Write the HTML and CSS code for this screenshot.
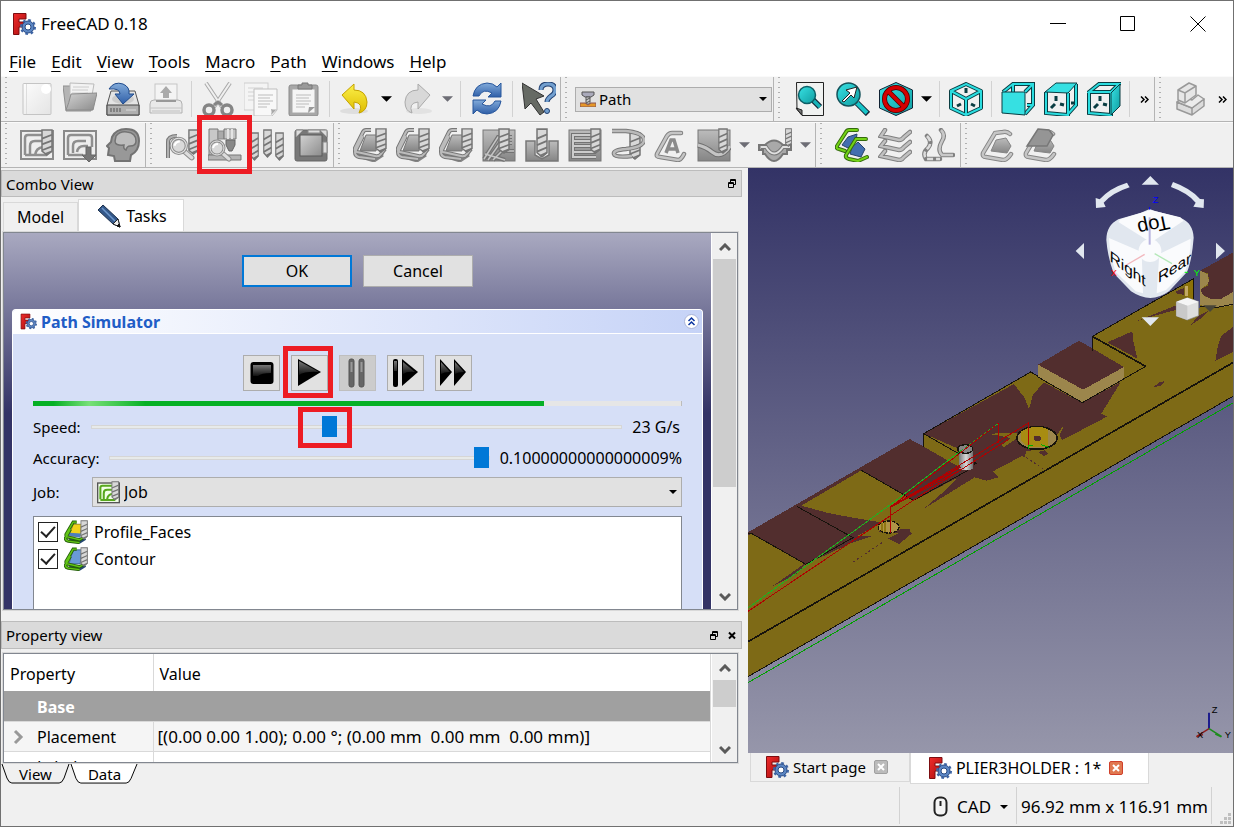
FILE: index.html
```html
<!DOCTYPE html>
<html lang="en">
<head>
<meta charset="utf-8">
<title>FreeCAD 0.18</title>
<link rel="stylesheet" href="styles.css">
</head>
<body>
<svg class="defs" aria-hidden="true">
  <defs>
    <linearGradient id="gGrey" x1="0" y1="0" x2="1" y2="1"><stop offset="0" stop-color="#d2d2d2"/><stop offset="1" stop-color="#8c8c8c"/></linearGradient>
    <linearGradient id="gDark" x1="0" y1="0" x2="0" y2="1"><stop offset="0" stop-color="#bcbcbc"/><stop offset="1" stop-color="#858585"/></linearGradient>
    <linearGradient id="gPaper" x1="0" y1="0" x2="1" y2="1"><stop offset="0" stop-color="#fcfcfc"/><stop offset="1" stop-color="#e4e4e4"/></linearGradient>
    <linearGradient id="gBlue" x1="0" y1="0" x2="0" y2="1"><stop offset="0" stop-color="#82abda"/><stop offset="1" stop-color="#2f5fa8"/></linearGradient>
    <linearGradient id="gYellow" x1="0" y1="0" x2="0" y2="1"><stop offset="0" stop-color="#fbf04a"/><stop offset="1" stop-color="#dfbd00"/></linearGradient>
    <linearGradient id="gCyan" x1="0" y1="0" x2="1" y2="1"><stop offset="0" stop-color="#38e2e4"/><stop offset="1" stop-color="#0f9ca0"/></linearGradient>
    <linearGradient id="gGloss" x1="0" y1="0" x2="0" y2="1"><stop offset="0" stop-color="#777"/><stop offset="1" stop-color="#111"/></linearGradient>
    <linearGradient id="gSky" x1="0" y1="0" x2="0" y2="1"><stop offset="0" stop-color="#333366"/><stop offset="1" stop-color="#9696aa"/></linearGradient>
    <linearGradient id="gRed" x1="0" y1="0" x2="1" y2="1"><stop offset="0" stop-color="#f02c2c"/><stop offset="1" stop-color="#a80d0d"/></linearGradient>
    <linearGradient id="gSteel" x1="0" y1="0" x2="1" y2="0"><stop offset="0" stop-color="#777"/><stop offset=".5" stop-color="#d8d8d8"/><stop offset="1" stop-color="#707070"/></linearGradient>
  </defs>

  <symbol id="logo" viewBox="0 0 24 24">
    <path d="M1.5 1.5H14V7H7v3h5v5H7v7.500H1.500z" fill="url(#gRed)" stroke="#7c0d10"/>
    <circle cx="16" cy="15" r="6" fill="#5b86c4" stroke="#2a4a82"/>
    <circle cx="16" cy="15" r="7" fill="none" stroke="#3c63a3" stroke-width="2" stroke-dasharray="2.700 2.800"/>
    <circle cx="16" cy="15" r="3" fill="#fff" stroke="#2a4a82"/>
  </symbol>
  <symbol id="bit" viewBox="0 0 12 28" preserveAspectRatio="none">
    <path d="M1 1h10v22l-5 4-5-4z" fill="#d8d8d8" stroke="#757575" stroke-width="1.500"/>
    <path d="M1 10l10-4M1 16l10-4M1 22l10-4M4 26l7-3" stroke="#757575" stroke-width="1.800"/>
  </symbol>
  <symbol id="lens" viewBox="0 0 24 24">
    <path d="M13 14l8 7" stroke="#8d8d8d" stroke-width="5" stroke-linecap="round"/><path d="M13 14l8 7" stroke="#dcdcdc" stroke-width="3" stroke-linecap="round"/>
    <circle cx="9" cy="10" r="7" fill="#d9d9d9" stroke="#8d8d8d" stroke-width="3"/><circle cx="9" cy="10" r="7" fill="none" stroke="#e6e6e6"/>
    <path d="M5 10q1-4 5-4" fill="none" stroke="#fff" stroke-width="2"/>
  </symbol>

  <symbol id="i-new" viewBox="0 0 34 34"><rect x="3" y="1.500" width="28" height="31" rx="1" fill="url(#gPaper)" stroke="#c4c4c4"/><path d="M6.500 2v30" stroke="#ddd"/><circle cx="26" cy="7" r="5" fill="#fff"/></symbol>
  <symbol id="i-open" viewBox="0 0 34 34"><path d="M0 4h8l2 3h18v22H3z" fill="#b4b4b4" stroke="#8f8f8f"/><path d="M7 1l24 1-3 17-21-2z" fill="#f3f3f3" stroke="#bbb"/><path d="M10 5h16M9 8h16M9 11h16" stroke="#ccc"/><path d="M8 12l26-1-4 17H3q3-7 5-16z" fill="url(#gGrey)" stroke="#8b8b8b"/></symbol>
  <symbol id="i-save" viewBox="0 0 34 34"><path d="M5 9h24l4 14v10H1V23z" fill="#e4e4e4" stroke="#555"/><path d="M1 23h32v10H1z" fill="#b0b0b0" stroke="#444"/><path d="M5 26v4M8 26v4M11 26v4M14 26v4" stroke="#555"/><path d="M20 28h10" stroke="#ddd"/><ellipse cx="17" cy="17" rx="11" ry="5" fill="#ccc"/><path d="M3 7Q8-1 17 2q7 3 6 10h5L17 22 9 12h5q0-6-11-5z" fill="url(#gBlue)" stroke="#1f4a8c"/></symbol>
  <symbol id="i-print" viewBox="0 0 34 34"><rect x="6" y="2" width="22" height="19" fill="#f4f4f4" stroke="#c5c5c5"/><path d="M17 4l6 7h-3v5h-6v-5h-3z" fill="#aaa"/><path d="M1 22q0-4 4-4h24q4 0 4 4v9H1z" fill="#e9e9e9" stroke="#b1b1b1"/><path d="M7 19h20" stroke="#999" stroke-width="2"/><path d="M1 26h32" stroke="#c4c4c4"/><rect x="3" y="28" width="28" height="4" fill="#d5d5d5"/></symbol>
  <symbol id="i-cut" viewBox="0 0 34 34"><path d="M5 1l16 24M29 1L13 25" stroke="#a9a9a9" stroke-width="4"/><path d="M5 1l16 24M29 1L13 25" stroke="#f0f0f0" stroke-width="2"/><circle cx="8" cy="28" r="5" fill="none" stroke="#858585" stroke-width="3.500"/><circle cx="26" cy="28" r="5" fill="none" stroke="#858585" stroke-width="3.500"/><path d="M13 23l4-3 4 3" stroke="#858585" stroke-width="3" fill="none"/></symbol>
  <symbol id="i-copy" viewBox="0 0 34 34"><rect x="0" y="1" width="24" height="27" fill="#f4f4f4" stroke="#cecece"/><path d="M4 6h15M4 10h6M4 14h6M4 18h6" stroke="#d2d2d2"/><path d="M10 7h23v21l-5 6H10z" fill="#f8f8f8" stroke="#bfbfbf"/><path d="M14 13h15M14 16h12M14 19h15M14 22h12M14 25h9" stroke="#bcbcbc"/><path d="M27 33q1-4 0-6 4 1 6 0z" fill="#a8a8a8"/></symbol>
  <symbol id="i-paste" viewBox="0 0 34 34"><rect x="2" y="3" width="29" height="31" rx="2" fill="#a7a7a7" stroke="#8b8b8b"/><rect x="5" y="7" width="23" height="24" fill="#f5f5f5" stroke="#aaa"/><path d="M11 7V3h4V1h6v2h4v4z" fill="#999" stroke="#777"/><path d="M9 13h15M9 16h13M9 19h15M9 22h13M9 25h9" stroke="#bbb"/><path d="M21 31l1-6h6z" fill="#999"/></symbol>
  <symbol id="i-undo" viewBox="0 0 34 34"><ellipse cx="15" cy="29" rx="14" ry="3" fill="#dedede"/><path d="M3 13L15 2v6q12 0 13 12 0 9-8 11 5-10-5-11v7z" fill="url(#gYellow)" stroke="#c4a200"/></symbol>
  <symbol id="i-redo" viewBox="0 0 34 34"><ellipse cx="19" cy="29" rx="13" ry="3" fill="#e2e2e2"/><path d="M30 13L18 2v6Q6 8 5 20q0 9 7 11-4-10 6-11v7z" fill="#d8d8d8" stroke="#aaa"/></symbol>
  <symbol id="i-refresh" viewBox="0 0 34 34"><path d="M3 14Q5 2 17 1q6 0 10 4l4-4v14H18l4-4q-9-5-13 3z" fill="url(#gBlue)" stroke="#27569c"/><path d="M31 19q-2 12-14 13-6 0-10-4l-4 4V18h13l-4 4q9 5 13-3z" fill="url(#gBlue)" stroke="#27569c"/></symbol>
  <symbol id="i-what" viewBox="0 0 34 34"><path d="M0 1l22 13-8 3 8 13-4 3-9-12-6 6z" fill="#666a64" stroke="#333"/><path d="M19 8q0-6 7-6t7 6q0 4-4 6-4 3-4 6" fill="none" stroke="#203f70" stroke-width="5"/><path d="M19 8q0-6 7-6t7 6q0 4-4 6-4 3-4 6" fill="none" stroke="#729fcf" stroke-width="3"/><circle cx="25" cy="29" r="2.500" fill="#729fcf" stroke="#203f70"/></symbol>
  <symbol id="i-fit" viewBox="0 0 34 34"><path d="M3.500.500h27v33H9l-5-6z" fill="#f0f2f1" stroke="#222"/><path d="M3 26l6 7V28z" fill="#777" stroke="#222"/><path d="M19 17l8 8" stroke="#123" stroke-width="6"/><path d="M19 17l8 8" stroke="#17b4b8" stroke-width="3.500"/><circle cx="14" cy="13" r="8.500" fill="url(#gCyan)" stroke="#0d5f66" stroke-width="1.500"/></symbol>
  <symbol id="i-zoom" viewBox="0 0 34 34"><path d="M21 21l11 11" stroke="#123" stroke-width="6"/><path d="M21 21l10 10" stroke="#17c4c8" stroke-width="4"/><circle cx="12.500" cy="12.500" r="11.500" fill="url(#gCyan)" stroke="#15525a" stroke-width="1.500"/><path d="M6 19l8-8-4-3 11-3-3 11-3-3-7 7z" fill="#fff" stroke="#222"/></symbol>
  <symbol id="i-draw" viewBox="0 0 34 34"><path d="M17 .500L33.500 8v18L17 33.500.500 26V8z" fill="url(#gCyan)" stroke="#123"/><circle cx="17" cy="17" r="11.500" fill="none" stroke="#4c0000" stroke-width="5"/><path d="M9 9l16 16" stroke="#4c0000" stroke-width="5"/><circle cx="17" cy="17" r="11.500" fill="none" stroke="#d40000" stroke-width="3.500"/><path d="M9 9l16 16" stroke="#d40000" stroke-width="3.500"/></symbol>
  <symbol id="i-iso" viewBox="0 0 34 34"><path d="M17 2l15 7v17l-15 7-15-7V9zM2 9l15 8 15-8M17 17v16" fill="none" stroke="#0a3d42" stroke-width="4" stroke-linejoin="round"/><path d="M17 2l15 7v17l-15 7-15-7V9zM2 9l15 8 15-8M17 17v16" fill="none" stroke="#2bdde0" stroke-width="2"/><path d="M17 6v5M8 24l4-2M26 24l-4-2" stroke="#0a3d42" stroke-width="3"/></symbol>
  <symbol id="i-front" viewBox="0 0 34 34"><path d="M2 10L12 2h20v21l-8 9M12 2v8M24 10l8-8M26 23h6" fill="none" stroke="#0a3d42" stroke-width="4"/><path d="M2 10L12 2h20v21l-8 9M12 2v8M24 10l8-8M26 23h6" fill="none" stroke="#2bdde0" stroke-width="2"/><path d="M1 10h23v23L1 31z" fill="#36e0e2" stroke="#0a3d42"/></symbol>
  <symbol id="i-top" viewBox="0 0 34 34"><path d="M2 10v21l22 2V11M24 32l8-9V2" fill="none" stroke="#0a3d42" stroke-width="4"/><path d="M2 10v21l22 2V11M24 32l8-9V2" fill="none" stroke="#2bdde0" stroke-width="2"/><path d="M1 10L12 1h21l-9 10z" fill="#36e0e2" stroke="#0a3d42"/><path d="M12 14v5M7 26l4-4M16 22l4 1M27 21h4" stroke="#0a3d42" stroke-width="3"/></symbol>
  <symbol id="i-right" viewBox="0 0 34 34"><path d="M2 10L12 2h20L24 10zM2 10v21l22 2V11" fill="none" stroke="#0a3d42" stroke-width="4"/><path d="M2 10L12 2h20L24 10zM2 10v21l22 2V11" fill="none" stroke="#2bdde0" stroke-width="2"/><path d="M24 11l9-9v22l-9 9z" fill="url(#gCyan)" stroke="#0a3d42"/><path d="M13 14v5M7 26l4-4M16 22l4 1" stroke="#0a3d42" stroke-width="3"/></symbol>
  <symbol id="i-part" viewBox="0 0 34 34"><path d="M3 20l15 6v7L3 27zM18 26l12-9v7l-12 9z" fill="#dcdcdc" stroke="#999" stroke-width="1.500" stroke-linejoin="round"/><path d="M3 20l7-5 8 3 6-5 6 4-12 9z" fill="#ececec" stroke="#999" stroke-width="1.500" stroke-linejoin="round"/><path d="M4 8L15 1l7 3v9l-11 8-7-3z" fill="#e6e6e6" stroke="#999" stroke-width="1.500" stroke-linejoin="round"/><path d="M4 8l7 3 11-7M11 11v10" fill="none" stroke="#999" stroke-width="1.500"/></symbol>

  <symbol id="i-job" viewBox="0 0 34 34"><rect x="1" y="3" width="32" height="28" fill="#eee" stroke="#8a8a8a" stroke-width="2"/><path d="M5 27V10q0-3 3-3h15M10 27v-9q0-5 5-5h8M27 27H5M15 27q1-7 8-8" fill="none" stroke="#8f8f8f" stroke-width="2.500"/><use href="#bit" x="21" y="1" width="12" height="27"/></symbol>
  <symbol id="i-post" viewBox="0 0 34 34"><rect x="1" y="3" width="32" height="28" fill="#eee" stroke="#8a8a8a" stroke-width="2"/><path d="M5 27V10q0-3 3-3h18q3 0 3 3v9M10 25v-7q0-5 5-5h8M20 27H5M14 24q1-6 7-6h4" fill="none" stroke="#8f8f8f" stroke-width="2.500"/><path d="M23 19h5v8h5l-7 7-7-7h4z" fill="#777" stroke="#666"/></symbol>
  <symbol id="i-head" viewBox="0 0 34 34"><path d="M6 9Q10 1 20 1q13 0 13 12 0 10-8 14l-1 6H9l-1-5-6-1 1-7-2-2 4-4z" fill="#989898" stroke="#737373" stroke-width="2"/><path d="M10 8q4-5 11-4 9 1 9 9 0 5-6 5-3 0-4 4-3-1-2-5-9 1-9-4z" fill="#bdbdbd" stroke="#737373" stroke-width="1.500"/></symbol>
  <symbol id="i-inspect" viewBox="0 0 34 34"><path d="M3 30V14q0-6 9-6" fill="none" stroke="#777" stroke-width="4"/><path d="M3 30V14q0-6 9-6" fill="none" stroke="#b2b2b2" stroke-width="2"/><use href="#bit" x="23" y="1" width="11" height="26"/><use href="#lens" x="4" y="7" width="26" height="26"/></symbol>
  <symbol id="i-sim" viewBox="0 0 34 34"><path d="M1 1h9v26H1z" fill="#c8c8c8" stroke="#777"/><path d="M10 3h6v8h-6z" fill="#aaa" stroke="#888"/><path d="M0 27h33v5H0z" fill="#b4b4b4" stroke="#777"/><path d="M16 1h12v10H16z" fill="#c3c3c3" stroke="#777"/><path d="M20 1v10M24 1v10" stroke="#e4e4e4" stroke-width="2"/><path d="M18 12h9v5l-3 6h-3l-3-6z" fill="#888" stroke="#666"/><use href="#lens" x="0" y="10" width="24" height="24"/></symbol>
  <symbol id="i-bits" viewBox="0 0 34 34"><use href="#bit" x="-1" y="4" width="9" height="29"/><use href="#bit" x="12" y="1" width="9" height="29"/><use href="#bit" x="24" y="4" width="9" height="29"/></symbol>
  <symbol id="i-setup" viewBox="0 0 34 34"><rect x="1" y="2" width="32" height="31" rx="2" fill="#787878" stroke="#666"/><rect x="6" y="7" width="22" height="21" fill="url(#gGrey)" stroke="#5a5a5a"/><path d="M2 9V2h7M14 2h12v3H14zM33 14v11h-4V14zM26 2h7v7" fill="#ddd" stroke="#888"/></symbol>
  <symbol id="i-profile" viewBox="0 0 34 34"><path d="M5 25l16 6 9-6M5 28l16 5 9-6" fill="none" stroke="#858585" stroke-width="3"/><path d="M13 7h12l-2 16H7z" fill="url(#gDark)" stroke="#777"/><path d="M18 2h-5q-2 0-3 2L2 20q-1 3 2 4l18 4q4 1 6-2l4-5M10 8L2 24q0 4 4 5l16 2" fill="none" stroke="#777" stroke-width="4"/><path d="M18 2h-5q-2 0-3 2L2 20q-1 3 2 4l18 4q4 1 6-2l4-5M10 8L2 24q0 4 4 5l16 2" fill="none" stroke="#bcbcbc" stroke-width="2"/><use href="#bit" x="22" y="0" width="12" height="25"/></symbol>
  <symbol id="i-pocket" viewBox="0 0 34 34"><rect x="1" y="2" width="32" height="31" fill="url(#gDark)" stroke="#777"/><path d="M2 31L16 9h14M6 32l12-17h12M11 32l9-9h12M3 26l20 6" fill="none" stroke="#737373" stroke-width="4"/><path d="M2 31L16 9h14M6 32l12-17h12M11 32l9-9h12M3 26l20 6" fill="none" stroke="#c5c5c5" stroke-width="1.500"/><use href="#bit" x="16" y="0" width="12" height="26"/></symbol>
  <symbol id="i-drill" viewBox="0 0 34 34"><path d="M1 13h9v14l7 4 7-4V13h9v20H1z" fill="url(#gDark)" stroke="#777" stroke-width="1.500"/><use href="#bit" x="11" y="0" width="12" height="30"/></symbol>
  <symbol id="i-face" viewBox="0 0 34 34"><rect x="1" y="2" width="32" height="31" fill="url(#gDark)" stroke="#777"/><path d="M30 7H5v6h22M27 18H5v-6M5 18v6h23M28 29H5v-6" fill="none" stroke="#737373" stroke-width="4"/><path d="M30 7H5v6h22M27 18H5v-6M5 18v6h23M28 29H5v-6" fill="none" stroke="#ccc" stroke-width="2"/><use href="#bit" x="22" y="0" width="11" height="26"/></symbol>
  <symbol id="i-helix" viewBox="0 0 34 34"><use href="#bit" x="18" y="4" width="12" height="28"/><path d="M1 3h14q18 2 18 9t-18 9Q2 22 3 26t18 2" fill="none" stroke="#777" stroke-width="4.500"/><path d="M1 3h14q18 2 18 9t-18 9Q2 22 3 26t18 2" fill="none" stroke="#bababa" stroke-width="2.500"/></symbol>
  <symbol id="i-engrave" viewBox="0 0 34 34"><path d="M27 5H18q-3 0-5 3L3 26q-1 3 3 3l18 3q3 0 6-6" fill="none" stroke="#808080" stroke-width="4.500" stroke-linecap="round"/><path d="M27 5H18q-3 0-5 3L3 26q-1 3 3 3l18 3q3 0 6-6" fill="none" stroke="#c5c5c5" stroke-width="2.500" stroke-linecap="round"/><path d="M12 25l5-13h3l4 13M14 21h8" fill="none" stroke="#8b8b8b" stroke-width="3.500"/></symbol>
  <symbol id="i-surface" viewBox="0 0 34 34"><rect x="1" y="2" width="32" height="31" fill="url(#gDark)" stroke="#777"/><path d="M1 17q8 2 14 7t12 1q5-4 6-7" fill="none" stroke="#707070" stroke-width="5"/><path d="M1 17q8 2 14 7t12 1q5-4 6-7" fill="none" stroke="#c5c5c5" stroke-width="3"/><use href="#bit" x="21" y="0" width="10" height="26"/></symbol>
  <symbol id="i-bowl" viewBox="0 0 34 34"><path d="M1 17h6q9-9 18 0h8v5h-4v4h-4q-9 14-18 0H5v-4H1z" fill="#a9a9a9" stroke="#777" stroke-width="2"/><path d="M3 19h5q8 13 17 0h7" fill="none" stroke="#777" stroke-width="4"/><path d="M3 19h5q8 13 17 0h7" fill="none" stroke="#e0e0e0" stroke-width="2"/><use href="#bit" x="27" y="0" width="7" height="19"/></symbol>
  <symbol id="i-dressup" viewBox="0 0 34 34"><path d="M22 2H14q-2 0-3 2L2 18q-1 3 2 3l6 2" fill="none" stroke="#336a0c" stroke-width="4" stroke-linecap="round"/><path d="M22 2H14q-2 0-3 2L2 18q-1 3 2 3l6 2" fill="none" stroke="#73d216" stroke-width="2" stroke-linecap="round"/><path d="M13 9l9-3-1 7-8 7-6-3zM17 19l6-5 7 7-4 8-11-3z" fill="#426eb0" stroke="#27426c"/><path d="M31 11H21L11 27q-1 3 3 4l9 2 9-4" fill="none" stroke="#336a0c" stroke-width="4" stroke-linecap="round"/><path d="M31 11H21L11 27q-1 3 3 4l9 2 9-4" fill="none" stroke="#73d216" stroke-width="2" stroke-linecap="round"/></symbol>
  <symbol id="i-array" viewBox="0 0 34 34"><path d="M7 2l-4 6 18 4q3 0 5-3l6-5M7 13l-4 5 18 4q3 0 5-3l6-5M7 23l-4 5 18 4q3 0 5-3l6-5" fill="none" stroke="#818181" stroke-width="4.500" stroke-linecap="round"/><path d="M7 2l-4 6 18 4q3 0 5-3l6-5M7 13l-4 5 18 4q3 0 5-3l6-5M7 23l-4 5 18 4q3 0 5-3l6-5" fill="none" stroke="#c1c1c1" stroke-width="2.500" stroke-linecap="round"/></symbol>
  <symbol id="i-custom" viewBox="0 0 34 34"><path d="M6 8q6 6 1 12-6 5-2 11h14M20 2q5 5 1 11-5 9 0 14h11" fill="none" stroke="#818181" stroke-width="4.500" stroke-linecap="round"/><path d="M6 8q6 6 1 12-6 5-2 11h14" fill="none" stroke="#ddd" stroke-width="2.500" stroke-dasharray="6 3"/><path d="M20 2q5 5 1 11-5 9 0 14h11" fill="none" stroke="#c9c9c9" stroke-width="2.500"/></symbol>
  <symbol id="i-hop" viewBox="0 0 34 34"><path d="M16 12l10-2 5 8-4 7-16-2z" fill="url(#gDark)" stroke="#858585"/><path d="M30 6q-3-3-7-2l-8 1-12 20q-1 4 3 4l17 3q4 0 8-6" fill="none" stroke="#868686" stroke-width="4.500" stroke-linecap="round"/><path d="M30 6q-3-3-7-2l-8 1-12 20q-1 4 3 4l17 3q4 0 8-6" fill="none" stroke="#c6c6c6" stroke-width="2.500" stroke-linecap="round"/></symbol>
  <symbol id="i-stock" viewBox="0 0 34 34"><use href="#i-hop"/><path d="M15 1l11 1 4 5-6 11H4z" fill="#959595" stroke="#777" stroke-width="1.500"/></symbol>

  <symbol id="i-mill" viewBox="0 0 16 16"><path d="M2 1h12v3l-3 2H5L2 4z" fill="#aab" stroke="#555"/><path d="M6 6h4v7H6z" fill="#ccc" stroke="#555"/><path d="M6 9l4-2M6 12l4-2" stroke="#555"/><path d="M0 12h5l3 2 3-2h5v4H0z" fill="#e59728" stroke="#855"/></symbol>
  <symbol id="i-jobc" viewBox="0 0 34 34"><rect x="1" y="3" width="32" height="29" fill="#f2ffe8" stroke="#555" stroke-width="2"/><path d="M5 27V10q0-3 3-3h15M10 27v-9q0-5 5-5h8M27 28H5M15 27q1-7 8-8" fill="none" stroke="#58a81e" stroke-width="3"/><use href="#bit" x="21" y="0" width="12" height="29"/></symbol>
  <symbol id="i-opy" viewBox="0 0 34 34"><path d="M8 26l14 5 8-5" stroke="#24476f" stroke-width="5" fill="none"/><path d="M13 6h12l-2 17H7z" fill="#f0d21c" stroke="#7a6a00"/><path d="M8 18l16 1-1 6-17-3z" fill="#4c7dbd"/><path d="M18 3h-5L3 20q-1 3 2 4l17 4 7-4M9 13L2 26q0 3 4 4l16 2" fill="none" stroke="#25600a" stroke-width="4.500"/><path d="M18 3h-5L3 20q-1 3 2 4l17 4 7-4M9 13L2 26q0 3 4 4l16 2" fill="none" stroke="#63c716" stroke-width="2"/><use href="#bit" x="23" y="0" width="11" height="28"/></symbol>
  <symbol id="i-opb" viewBox="0 0 34 34"><path d="M8 26l14 5 8-5" stroke="#24476f" stroke-width="5" fill="none"/><path d="M13 4h12l-2 20H7z" fill="#6a9ad8" stroke="#24476f"/><path d="M18 3h-5L3 20q-1 3 2 4l17 4 7-4M9 13L2 26q0 3 4 4l16 2" fill="none" stroke="#25600a" stroke-width="4.500"/><path d="M18 3h-5L3 20q-1 3 2 4l17 4 7-4M9 13L2 26q0 3 4 4l16 2" fill="none" stroke="#63c716" stroke-width="2"/><use href="#bit" x="23" y="0" width="11" height="28"/></symbol>
  <symbol id="i-pencil" viewBox="0 0 24 24"><path d="M6 1L1 6l15 14 7 3-2-8z" fill="#34588a" stroke="#1b2f4c"/><path d="M5 4l13 13" stroke="#6d97cc" stroke-width="1.500"/><path d="M16 20l5-5 2 8z" fill="#eee" stroke="#222"/><path d="M20 22l2-2 1 3z" fill="#111" stroke="#111"/></symbol>
  <symbol id="up" viewBox="0 0 12 9"><path d="M1 7l5-5 5 5" fill="none" stroke="#5a5a5a" stroke-width="3"/></symbol>
  <symbol id="down" viewBox="0 0 12 9"><path d="M1 2l5 5 5-5" fill="none" stroke="#5a5a5a" stroke-width="3"/></symbol>
  <symbol id="tri" viewBox="0 0 12 6"><path d="M0 0h12L6 6z" fill="currentColor"/></symbol>
  <symbol id="more" viewBox="0 0 9 7"><path d="M1 .500l3 3-3 3M5 .500l3 3-3 3" fill="none" stroke="#000" stroke-width="1.500"/></symbol>
  <symbol id="float" viewBox="0 0 8 9"><path d="M2.500 3V.500h5v5H6M2 1.500h6M.500 3.500h5v5h-5zM0 4.500h6" fill="none" stroke="#000"/></symbol>
  <symbol id="x" viewBox="0 0 8 8"><path d="M1 1l6 6M7 1L1 7" stroke="currentColor" stroke-width="2"/></symbol>
</svg>

<div class="window">
  <header class="titlebar">
    <svg class="logo"><use href="#logo"/></svg>
    <h1>FreeCAD 0.18</h1>
    <div class="controls">
      <button aria-label="Minimize"><svg viewBox="0 0 16 16"><path d="M0 7.500h16" stroke="#000"/></svg></button>
      <button aria-label="Maximize"><svg viewBox="0 0 16 16"><path d="M.500.500h14v14H.500z" fill="none" stroke="#000"/></svg></button>
      <button aria-label="Close"><svg viewBox="0 0 16 16"><path d="M.500.500l15 15M15.500.500l-15 15" stroke="#000"/></svg></button>
    </div>
  </header>

  <nav class="menubar">
    <a href="#"><u>F</u>ile</a><a href="#"><u>E</u>dit</a><a href="#"><u>V</u>iew</a><a href="#"><u>T</u>ools</a><a href="#"><u>M</u>acro</a><a href="#"><u>P</u>ath</a><a href="#"><u>W</u>indows</a><a href="#"><u>H</u>elp</a>
  </nav>

  <div class="toolrow">
    <div class="toolbar">
      <button class="tool" aria-label="New"><svg><use href="#i-new"/></svg></button>
      <button class="tool" aria-label="Open"><svg><use href="#i-open"/></svg></button>
      <button class="tool" aria-label="Save"><svg><use href="#i-save"/></svg></button>
      <button class="tool" aria-label="Print"><svg><use href="#i-print"/></svg></button>
      <span class="sep"></span>
      <button class="tool" aria-label="Cut"><svg><use href="#i-cut"/></svg></button>
      <button class="tool" aria-label="Copy"><svg><use href="#i-copy"/></svg></button>
      <button class="tool" aria-label="Paste"><svg><use href="#i-paste"/></svg></button>
      <span class="sep"></span>
      <button class="tool" aria-label="Undo"><svg><use href="#i-undo"/></svg></button>
      <button class="drop" aria-label="Undo list"><svg><use href="#tri"/></svg></button>
      <button class="tool" aria-label="Redo"><svg><use href="#i-redo"/></svg></button>
      <button class="drop off" aria-label="Redo list"><svg><use href="#tri"/></svg></button>
      <span class="sep"></span>
      <button class="tool" aria-label="Refresh"><svg><use href="#i-refresh"/></svg></button>
      <span class="sep"></span>
      <button class="tool" aria-label="What's this?"><svg><use href="#i-what"/></svg></button>
    </div>
    <div class="toolbar">
      <div class="combo workbench">
        <svg class="combo-icon"><use href="#i-mill"/></svg>
        <select aria-label="Workbench"><option>Path</option></select>
        <svg class="combo-arrow"><use href="#tri"/></svg>
      </div>
    </div>
    <div class="toolbar">
      <button class="tool" aria-label="Fit all"><svg><use href="#i-fit"/></svg></button>
      <button class="tool" aria-label="Fit selection"><svg><use href="#i-zoom"/></svg></button>
      <button class="tool" aria-label="Draw style"><svg><use href="#i-draw"/></svg></button>
      <button class="drop" aria-label="Draw style list"><svg><use href="#tri"/></svg></button>
      <span class="sep"></span>
      <button class="tool" aria-label="Isometric"><svg><use href="#i-iso"/></svg></button>
      <span class="sep"></span>
      <button class="tool" aria-label="Front"><svg><use href="#i-front"/></svg></button>
      <button class="tool" aria-label="Top"><svg><use href="#i-top"/></svg></button>
      <button class="tool" aria-label="Right"><svg><use href="#i-right"/></svg></button>
      <span class="sep"></span>
      <button class="more" aria-label="More tools"><svg><use href="#more"/></svg></button>
    </div>
    <div class="toolbar last">
      <button class="tool" aria-label="Part"><svg><use href="#i-part"/></svg></button>
      <button class="more" aria-label="More tools"><svg><use href="#more"/></svg></button>
    </div>
  </div>

  <div class="toolrow path-row">
    <div class="toolbar">
      <button class="tool" aria-label="Job"><svg><use href="#i-job"/></svg></button>
      <button class="tool" aria-label="Post process"><svg><use href="#i-post"/></svg></button>
      <button class="tool" aria-label="Sanity check"><svg><use href="#i-head"/></svg></button>
    </div>
    <div class="toolbar">
      <button class="tool" aria-label="Inspect"><svg><use href="#i-inspect"/></svg></button>
      <button class="tool marked" aria-label="Simulator"><svg><use href="#i-sim"/></svg></button>
      <button class="tool" aria-label="Tool library"><svg><use href="#i-bits"/></svg></button>
      <button class="tool" aria-label="Setup"><svg><use href="#i-setup"/></svg></button>
    </div>
    <div class="toolbar">
      <button class="tool" aria-label="Contour"><svg><use href="#i-profile"/></svg></button>
      <button class="tool" aria-label="Profile faces"><svg><use href="#i-profile"/></svg></button>
      <button class="tool" aria-label="Profile edges"><svg><use href="#i-profile"/></svg></button>
      <button class="tool" aria-label="Pocket"><svg><use href="#i-pocket"/></svg></button>
      <button class="tool" aria-label="Drilling"><svg><use href="#i-drill"/></svg></button>
      <button class="tool" aria-label="Mill face"><svg><use href="#i-face"/></svg></button>
      <button class="tool" aria-label="Helix"><svg><use href="#i-helix"/></svg></button>
      <button class="tool" aria-label="Engrave"><svg><use href="#i-engrave"/></svg></button>
      <button class="tool" aria-label="3D surface"><svg><use href="#i-surface"/></svg></button>
      <button class="drop off" aria-label="3D list"><svg><use href="#tri"/></svg></button>
      <button class="tool" aria-label="Deburr"><svg><use href="#i-bowl"/></svg></button>
      <button class="drop off" aria-label="More operations"><svg><use href="#tri"/></svg></button>
    </div>
    <div class="toolbar">
      <button class="tool" aria-label="Dressup"><svg><use href="#i-dressup"/></svg></button>
      <button class="tool" aria-label="Array"><svg><use href="#i-array"/></svg></button>
      <button class="tool" aria-label="Simple copy"><svg><use href="#i-custom"/></svg></button>
    </div>
    <div class="toolbar last">
      <button class="tool" aria-label="Area"><svg><use href="#i-hop"/></svg></button>
      <button class="tool" aria-label="Area workplane"><svg><use href="#i-stock"/></svg></button>
    </div>
  </div>

  <main class="main">
    <aside class="docks">
      <section class="dock combo-dock">
        <div class="dock-title"><h2>Combo View</h2><button aria-label="Float"><svg><use href="#float"/></svg></button></div>
        <div class="tabs">
          <button class="tab">Model</button>
          <button class="tab active"><svg><use href="#i-pencil"/></svg>Tasks</button>
        </div>
        <div class="frame">
          <div class="tasks">
            <div class="dialog-buttons"><button class="ok">OK</button><button>Cancel</button></div>
            <div class="taskbox">
              <div class="taskbox-head"><svg class="mini-logo"><use href="#logo"/></svg><h3>Path Simulator</h3>
                <button aria-label="Collapse"><svg viewBox="0 0 15 15"><circle cx="7.500" cy="7.500" r="7" fill="#fff" stroke="#aab4d8"/><path d="M4.500 7l3-3 3 3M4.500 11l3-3 3 3" fill="none" stroke="#0b35a0" stroke-width="1.500"/></svg></button>
              </div>
              <div class="taskbox-body">
                <div class="player">
                  <button aria-label="Stop"><svg viewBox="0 0 30 30"><rect x="3.500" y="4" width="23" height="22" rx="3" fill="#000"/><path d="M6 7h18v8Q14 15 11 18H6z" fill="url(#gGloss)"/></svg></button>
                  <button class="marked" aria-label="Play"><svg viewBox="0 0 30 30"><path d="M3 1l23 13L3 28z" fill="#000"/><path d="M4 3l20 11Q10 13 4 17z" fill="url(#gGloss)"/></svg></button>
                  <button aria-label="Pause" disabled><svg viewBox="0 0 30 30"><rect x="6" y="1" width="5" height="28" rx="2" fill="#666" stroke="#555"/><rect x="16" y="1" width="5" height="28" rx="2" fill="#666" stroke="#555"/><path d="M8.500 4v10M18.500 4v10" stroke="#999" stroke-width="2"/></svg></button>
                  <button aria-label="Step"><svg viewBox="0 0 30 30"><rect x="2" y="1" width="5" height="28" rx="2" fill="#000"/><path d="M11 1l16 13-16 14z" fill="#000"/><path d="M12 4l12 10Q16 13 12 16zM3 3h3v10H3z" fill="url(#gGloss)"/></svg></button>
                  <button aria-label="Fast forward"><svg viewBox="0 0 30 30"><path d="M1 1l12 13L1 28zM15 1l12 13-12 14z" fill="#000"/><path d="M2 4l9 10q-6 0-9 2zM16 4l9 10q-6 0-9 2z" fill="url(#gGloss)"/></svg></button>
                </div>
                <progress value="788" max="1000" aria-label="Simulation progress"></progress>
                <div class="field speed"><label for="speed">Speed:</label>
                  <span class="slider-cell"><input id="speed" type="range" min="0" max="1000" value="448"></span><output>23 G/s</output></div>
                <div class="field"><label for="accuracy">Accuracy:</label>
                  <span class="slider-cell"><input id="accuracy" type="range" min="0" max="100" value="100"></span><output>0.10000000000000009%</output></div>
                <div class="field job"><label for="job">Job:</label>
                  <div class="combo"><svg class="combo-icon"><use href="#i-jobc"/></svg><select id="job"><option>Job</option></select><svg class="combo-arrow"><use href="#tri"/></svg></div></div>
                <ul class="ops">
                  <li><input type="checkbox" id="op1" checked><svg><use href="#i-opy"/></svg><label for="op1">Profile_Faces</label></li>
                  <li><input type="checkbox" id="op2" checked><svg><use href="#i-opb"/></svg><label for="op2">Contour</label></li>
                </ul>
              </div>
            </div>
          </div>
          <div class="scroll"><svg><use href="#up"/></svg><div class="track"><div class="thumb"></div></div><svg><use href="#down"/></svg></div>
        </div>
      </section>

      <section class="dock prop-dock">
        <div class="dock-title"><h2>Property view</h2><button aria-label="Float"><svg><use href="#float"/></svg></button><button aria-label="Close"><svg><use href="#x"/></svg></button></div>
        <div class="frame">
          <div class="table-wrap">
            <table>
              <thead><tr><th class="name">Property</th><th>Value</th></tr></thead>
              <tbody>
                <tr class="group"><td colspan="2">Base</td></tr>
                <tr class="alt"><td><svg viewBox="0 0 10 14"><path d="M1 1l6 6-6 6" fill="none" stroke="#999" stroke-width="3"/></svg>Placement</td><td class="value">[(0.00 0.00 1.00); 0.00 °; (0.00 mm  0.00 mm  0.00 mm)]</td></tr>
                <tr><td>Label</td><td class="value"></td></tr>
              </tbody>
            </table>
          </div>
          <div class="scroll"><svg><use href="#up"/></svg><div class="track"><div class="thumb small"></div></div><svg><use href="#down"/></svg></div>
        </div>
        <div class="prop-tabs">
          <button><svg viewBox="0 0 70 20" preserveAspectRatio="none"><path d="M1 0l5 14q2 5 5 5h48q3 0 5-5l5-14" fill="#f0f0f0" stroke="#000"/></svg><span>View</span></button>
          <button><svg viewBox="0 0 70 21" preserveAspectRatio="none"><path d="M1 0l5 15q2 5 5 5h46q3 0 5-5l6-15" fill="#fff" stroke="#000"/></svg><span>Data</span></button>
        </div>
      </section>
    </aside>

    <section class="view">
      <svg class="scene" viewBox="0 0 1455 1755" preserveAspectRatio="xMidYMid slice">
        <rect width="1455" height="1755" fill="url(#gSky)"/>
        <g shape-rendering="crispEdges">
          <path d="M0 1095L485 813 527 836V797L848 612 880 630 1033 550V505L1337 332V420H1357V308L1458 252V683L0 1526z" fill="#7e6a16"/>
          <path d="M0 1093L485 813 640 897 660 912 500 997 340 907 160 1013 240 1035 310 1048 400 1063 330 1103 370 1105 310 1125 175 1188 12 1097 0 1103zM175 1183L130 1215 70 1257 150 1215z" fill="#522e2e"/>
          <path d="M527 797L798 648 830 690 843 724 855 680 888 643 1003 705 1118 642 1095 680 1060 737 1077 746 945 815 925 812 915 830 880 842 835 850 830 866 820 865 735 910 752 928 715 938 680 928 528 1022 600 960 640 915 650 850z" fill="#522e2e"/>
          <path d="M527 797l103 60v38L527 836zM720 797l85-2 8 12-45 30-8-5 28-22zM920 810l30-42-15 32 5 14z" fill="#7e6a16"/>
          <path d="M870 852l20-5 12 10-15 7zM1078 523l75-33 3 30 12 52zM1160 462l130-52v14l-95 26zM1323 475l30-32 30-15-20 20zM1458 475l-38 28-10 30-8 45 56-28zM1215 658l20-16 14-2-8 12zM1283 370l25-10v20l-20-2zM388 1090l100-8-5 18zM420 1112l60-30 12 14-38 32z" fill="#522e2e"/>
          <path d="M1357 308l23 12 3 25-26 20 15 22 40 6 46-24v42l-50 8-51-7z" fill="#9c864c"/>
          <path d="M1357 308L1458 252V370l-38 22-30 2-24-12-9-17 22-12 4-18-3-18z" fill="#522e2e"/>
          <path d="M1313 350l24-16v62h-24z" fill="#8c7208"/><path d="M1310 355h10v30h-10z" fill="#c3aa66"/>
          <path d="M993 518l135 79-123 68-135-75z" fill="#522e2e"/>
          <path d="M870 590l135 75 123-68v35l-125 71-133-78z" fill="#9c864c"/>
          <g fill="none" stroke="#17130c" stroke-width="3">
            <path d="M527 836V797L848 612 870 625M870 627l133 77 192-110M1033 548v-43L1337 332v62M527 797l105 60M340 907l157 90 163-90M148 1016l167 93-140 79M0 1095l12 2 163 93M0 1526L1458 683M1357 414l45 5 56-11"/>
            <path d="M0 1421L1458 582M1033 505l160 90" stroke-width="5"/>
          </g>
          <path d="M315 1182l90-60M835 868l55 38" stroke="#522e2e" stroke-width="3" stroke-dasharray="6 8"/>
          <ellipse cx="867" cy="810" rx="60" ry="34" fill="#9c864c" stroke="#17130c" stroke-width="5"/>
          <path d="M820 790q20-13 47-13 20 0 32 6v53H845q-20-8-27-20z" fill="#a88c12"/><ellipse cx="868" cy="811" rx="11" ry="8" fill="#522e2e"/>
          <ellipse cx="422" cy="1077" rx="31" ry="18" fill="#b09546" stroke="#17130c" stroke-width="4" stroke-dasharray="10 4"/><path d="M402 1065v24M412 1062v30" stroke="#8f7610" stroke-width="6"/>
          <path d="M633 842h42v60q-21 10-42 0z" fill="url(#gSteel)"/><ellipse cx="652" cy="843" rx="23" ry="13" fill="#858585" stroke="#17130c" stroke-width="4"/><path d="M678 880l10 6-10 6z" fill="#17130c"/>
          <path d="M0 1544L1458 703" stroke="#00a000" stroke-width="3"/>
          <path d="M0 1330L500 994 780 815M840 830V766L427 1018M751 826v-60L440 1008M427 1018L640 905" fill="none" stroke="#b00000" stroke-width="3"/>
          <path d="M427 1095v-78l210-120" fill="none" stroke="#b00000" stroke-width="5"/>
          <path d="M0 1320L427 1010 640 847" fill="none" stroke="#20b020" stroke-width="3"/><path d="M640 847L751 766" fill="none" stroke="#20b020" stroke-width="3" stroke-dasharray="8 6"/><path d="M840 843v-12h14M880 830l22 8" fill="none" stroke="#00b000" stroke-width="3"/>
        </g>
        <g fill="#e1e7ef">
          <path d="M1207 24l26 26h-52zM1207 474l26-26h-52zM983 249l25-24v48zM1431 249l-27-25v50z"/>
          <path d="M1137 44q4 8 8 14-50 16-78 46l6 13-29 3-1-30 12 4q30-34 82-50zM1275 42q-4 8-6 15 50 18 74 47l-7 12 31 4 1-26-12-1q-28-32-81-51z"/>
        </g>
        <path d="M1205 123q12 5 30 10l62 16q38 15 40 60-6 72-20 103l-54 58q-28 20-56 20t-58-20l-52-54q-18-48-22-100 0-44 36-62l68-20z" fill="#e1e7ef"/>
        <path d="M1207 126l90 22 10 10-90 60-14 2-92-58 6-8zM1083 210l98 42 4 124-22-6-60-58q-18-50-20-102zM1328 212l-94 46-8 118 28-10 58-56q16-44 16-98z" fill="#fafbfd"/>
        <circle cx="1206" cy="248" r="34" fill="#fafbfd"/>
        <path d="M1205 148v82" stroke="#b9b5e0" stroke-width="6"/><path d="M1190 259l-60 35" stroke="#f2b8be" stroke-width="4"/><path d="M1220 257l52 30" stroke="#b4e8b8" stroke-width="4"/>
        <path d="M1205 117v8" stroke="#00f" stroke-width="3"/><path d="M1310 313h10" stroke="#0f0" stroke-width="3"/>
        <text class="face top" transform="translate(1260 142) rotate(168)">Top</text>
        <text class="face" transform="translate(1085 278) skewY(36)">Right</text>
        <text class="face" transform="translate(1230 346) skewY(-32)">Rear</text>
        <text class="axis" x="1214" y="104" fill="#0000ff">Z</text><text class="axis" x="1088" y="323" fill="#ff0000">X</text><text class="axis" x="1337" y="323" fill="#00ff00">Y</text>
        <path d="M1318 389l34 12v42l-34 13-33-12v-42z" fill="#dedede" stroke="#888" stroke-width="2"/><path d="M1318 389l34 12-34 12-33-12z" fill="#f5f5f5"/><path d="M1285 401l33 12v43l-33-12z" fill="#c9c9c9"/><path d="M1366 412h40l-20 20z" fill="#4a4638"/>
        <path d="M1383 1682v-48" stroke="#1c1c8c" stroke-width="6"/><path d="M1383 1682l-38 24M1345 1706l20-6" stroke="#8c1c1c" stroke-width="4"/><path d="M1383 1682l38 24M1402 1698l18 8" stroke="#1c8c1c" stroke-width="5"/>
        <text class="axis" x="1391" y="1634">Z</text><text class="axis" x="1347" y="1709">X</text><text class="axis" x="1430" y="1709">Y</text>
      </svg>
      <div class="mdi-tabs">
        <div class="mdi"><svg class="logo"><use href="#logo"/></svg><span class="start">Start page</span><button aria-label="Close tab"><svg><use href="#x"/></svg></button></div>
        <div class="mdi active"><svg class="logo"><use href="#logo"/></svg><span>PLIER3HOLDER : 1*</span><button aria-label="Close tab"><svg><use href="#x"/></svg></button></div>
      </div>
    </section>
  </main>

  <footer class="status">
    <button class="nav-style"><svg class="mouse" viewBox="0 0 15 21"><rect x="1.500" y="1.500" width="12" height="18" rx="5" fill="#f4f4f4" stroke="#222" stroke-width="2"/><path d="M7.500 5v5" stroke="#222" stroke-width="2"/></svg>CAD<svg class="tri"><use href="#tri"/></svg></button>
    <span class="dims">96.92 mm x 116.91 mm</span>
    <svg class="grip" viewBox="0 0 11 11"><path d="M8 0h3v3H8zM4 4h3v3H4zM8 4h3v3H8zM0 8h3v3H0zM4 8h3v3H4zM8 8h3v3H8z" fill="#bfbfbf"/></svg>
  </footer>
</div>
</body>
</html>
```
FILE: styles.css
```css
*, *::before, *::after { box-sizing: border-box; }
body { margin: 0; font-family: "Noto Sans", "Open Sans", sans-serif; font-size: 16px; color: #000; background: #f0f0f0; }
button, select, input { font: inherit; color: inherit; }
button { margin: 0; padding: 0; border: 0; background: none; }
svg { display: block; overflow: visible; }
h1, h2, h3 { margin: 0; font-weight: 400; }
.defs { position: absolute; width: 0; height: 0; }

.window { display: flex; flex-direction: column; height: 100vh; border: 1px solid #707070; overflow: hidden; background: #f0f0f0; }

.titlebar { display: flex; align-items: center; flex: none; height: 45px; padding-left: 11px; background: #fff; }
.logo { width: 24px; height: 24px; flex: none; }
.titlebar h1 { margin-left: 5px; font-size: 17px; }
.controls { display: flex; margin-left: auto; }
.controls button { display: grid; place-items: center; width: 70px; height: 45px; }
.controls svg { width: 16px; height: 16px; }

.menubar { display: flex; align-items: center; flex: none; gap: 15px; height: 30px; padding-left: 8px; font-size: 17px; background: #fff; }
.menubar a { color: #000; text-decoration: none; }
.menubar u { text-underline-offset: 3px; text-decoration-thickness: 1px; }

.toolrow { display: flex; flex: none; height: 46px; border-top: 1px solid #fafafa; border-bottom: 1px solid #b4b4b4; }
.toolbar { display: flex; align-items: center; flex: none; padding-left: 14px; border-right: 1px solid #b4b4b4; background: radial-gradient(circle, #b0b0b0 1px, transparent 1px) 3px 3px / 4px 5px repeat-y; }
.path-row .toolbar { padding-right: 1px; }
.toolbar.last { border-right: 0; }
.tool { position: relative; display: grid; place-items: center; width: 43px; height: 43px; }
.tool svg { width: 34px; height: 34px; overflow: hidden; }
.drop { display: grid; place-items: center; width: 18px; height: 43px; color: #000; }
.drop svg { width: 11px; height: 6px; }
.drop.off { color: #6d6d75; }
.sep { width: 1px; height: 36px; margin: 0 4px; background: #d2d2d2; }
.more { display: grid; place-items: center; width: 20px; height: 43px; }
.more svg { width: 9px; height: 7px; }
.marked::after { content: ""; position: absolute; inset: -9px -6px -7px; z-index: 2; border: 5px solid #ed1c24; pointer-events: none; }

.combo { position: relative; display: flex; align-items: center; }
.combo select { width: 100%; height: 100%; appearance: none; border: 1px solid #adadad; border-radius: 0; background: #e1e1e1; padding: 0 24px 0 31px; }
.combo-icon, .combo-arrow { position: absolute; pointer-events: none; }
.combo-arrow { right: 5px; width: 8px; height: 4px; }
.workbench { width: 197px; height: 25px; margin-right: 1px; }
.workbench select { padding-left: 23px; font-size: 15px; }
.workbench .combo-icon { left: 5px; width: 16px; height: 16px; }

.main { display: grid; grid-template-columns: minmax(0, 747fr) minmax(0, 485fr); flex: 1; min-height: 0; }
.docks { display: flex; flex-direction: column; min-height: 0; padding: 2px 6px 0 0; font-size: 15px; }
.dock { display: flex; flex-direction: column; }
.combo-dock { flex: 1; min-height: 0; }
.dock-title { display: flex; align-items: center; flex: none; gap: 10px; height: 27px; padding: 0 5px 0 4px; border: 1px solid #bcbcbc; background: #dadada; }
.dock-title h2 { flex: 1; font-size: 15px; line-height: 20px; }
.dock-title svg { width: 8px; height: 9px; }

.tabs { display: flex; align-items: flex-end; flex: none; height: 35px; padding-left: 2px; }
.tab { display: flex; align-items: center; justify-content: center; gap: 5px; width: 75px; height: 30px; border: 1px solid #d9d9d9; border-bottom: 0; font-size: 16px; line-height: 20px; padding-bottom: 1px; }
.tab.active { width: 106px; height: 33px; background: #fff; padding-left: 2px; }
.tab svg { width: 24px; height: 24px; }

.frame { display: flex; flex: 1; min-height: 0; margin: 0 4px 0 2px; border: 1px solid #828790; outline: 1px solid #d9d9d9; overflow: hidden; background: #fff; }
.combo-dock .frame { margin-bottom: 11px; }
.scroll { display: flex; flex-direction: column; align-items: center; flex: none; width: 26px; padding: 10px 1px 8px; border-left: 1px solid #fff; background: #f0f0f0; }
.scroll svg { width: 12px; height: 9px; flex: none; }
.track { flex: 1; width: 100%; margin: 7px 0; }
.thumb { height: 70%; background: #cdcdcd; }
.thumb.small { height: 27px; }

.tasks { flex: 1; min-width: 0; padding: 22px 8px 0; overflow: hidden; background: linear-gradient(#a9a9c0, #333366 180px); }
.dialog-buttons { display: flex; justify-content: center; gap: 11px; }
.dialog-buttons button { width: 110px; height: 32px; border: 1px solid #adadad; background: #e1e1e1; font-size: 16px; }
.dialog-buttons .ok { border: 2px solid #0078d7; }
.taskbox { margin-top: 22px; border: 1px solid #fff; border-bottom: 0; border-radius: 4px 4px 0 0; background: #d6dff7; overflow: hidden; }
.taskbox-head { display: flex; align-items: center; gap: 4px; height: 24px; padding: 0 3px 0 7px; border-bottom: 1px solid #fff; background: linear-gradient(90deg, #fff, #c6d3f7); }
.mini-logo { width: 17px; height: 17px; }
.taskbox h3 { flex: 1; font-size: 16px; font-weight: 700; color: #215dc6; }
.taskbox-head button svg { width: 15px; height: 15px; }
.taskbox-body { padding: 21px 20px 0; }

.player { display: flex; justify-content: center; gap: 11px; }
.player button { position: relative; display: grid; place-items: center; width: 37px; height: 36px; border: 1px solid #adadad; background: #e1e1e1; }
.player button:disabled { background: #ccc; border-color: #bfbfbf; }
.player svg { width: 30px; height: 30px; }
.player .marked::after { inset: -10px -6px -8px -9px; }

progress { display: block; width: 100%; height: 5px; margin: 10px 0 5px; appearance: none; border: 0; }
progress::-webkit-progress-bar { background: #e6e6e6; border-right: 1px solid #bcbcbc; }
progress::-webkit-progress-value { background: linear-gradient(90deg, #06b025 4%, #78e078 11%, #06b025 22%); }

.field { display: flex; align-items: center; gap: 10px; height: 31px; }
.field output { font-size: 16px; }
.speed { gap: 10px; }
.speed output { padding-right: 2px; }
.slider-cell { position: relative; display: flex; align-items: center; flex: 1; height: 21px; }
.slider-cell input { width: 100%; height: 21px; margin: 0; appearance: none; background: none; }
.slider-cell input::-webkit-slider-runnable-track { height: 4px; border: 1px solid #d6d6d6; background: #e7eaea; }
.slider-cell input::-webkit-slider-thumb { appearance: none; width: 15px; height: 21px; margin-top: -10px; background: #0078d7; }
.speed .slider-cell::after { content: ""; position: absolute; left: 39%; top: -9px; width: 54px; height: 41px; border: 5px solid #ed1c24; pointer-events: none; }
.job { height: 30px; margin: 4px 0 9px; }
.job label { width: 49px; }
.job .combo { flex: 1; height: 30px; }
.job select { font-size: 16px; }
.job .combo-icon { left: 5px; width: 23px; height: 23px; }

.ops { height: 160px; margin: 0; padding: 1px 4px; border: 1px solid #828790; background: #fff; list-style: none; font-size: 16px; }
.ops li { display: flex; align-items: center; gap: 6px; height: 27px; }
.ops svg { width: 24px; height: 24px; }
.ops input { width: 20px; height: 20px; margin: 0; appearance: none; border: 1px solid #222; background: #fff; }
.ops input:checked::before { content: ""; display: block; width: 8px; height: 14px; margin: 0 auto; border: solid #222; border-width: 0 2px 2px 0; transform: rotate(42deg); }

.prop-dock { flex: none; height: 164px; }
.prop-dock .dock-title { height: 28px; }
.prop-dock .frame { margin-top: 4px; }
.table-wrap { flex: 1; min-width: 0; overflow: hidden; }
table { width: 100%; border-collapse: collapse; table-layout: fixed; font-size: 16px; }
th, td { height: 30px; padding: 2px 0 0 33px; text-align: left; font-weight: 400; line-height: 22px; border-right: 1px solid #d9d9d9; border-bottom: 1px solid #d9d9d9; white-space: pre; }
th { height: 37px; padding-left: 6px; border-bottom: 0; }
.name { width: 149px; }
.group td { background: #a0a0a0; color: #fff; font-weight: 700; }
.alt td { background: #f5f5f5; }
td.value { padding-left: 4px; font-size: 17px; }
td svg { position: absolute; left: 14px; width: 10px; height: 14px; margin-top: 4px; }
.prop-tabs { display: flex; height: 21px; font-size: 15px; margin-top: 1px; }
.prop-tabs button { position: relative; width: 69px; height: 20px; }
.prop-tabs svg { position: absolute; inset: 0; width: 100%; height: 100%; }
.prop-tabs span { position: relative; line-height: 20px; }

.view { display: flex; flex-direction: column; min-height: 0; min-width: 0; }
.scene { flex: 1; min-height: 0; width: 100%; overflow: hidden; }
.face { font-family: "Liberation Sans", sans-serif; font-size: 46px; }
.face.top { font-size: 60px; }
.axis { font-family: "Liberation Sans", sans-serif; font-size: 28px; }
.mdi-tabs { display: flex; align-items: flex-start; flex: none; height: 32px; padding-left: 2px; }
.mdi { display: flex; align-items: center; gap: 4px; height: 29px; padding: 0 21px 0 14px; border: 1px solid #d9d9d9; border-top: 0; white-space: nowrap; }
.mdi.active { height: 31px; background: #fff; padding: 0 25px 0 17px; }
.mdi .start { font-size: 15px; }
.mdi button { display: grid; place-items: center; width: 14px; height: 14px; margin-left: 4px; border: 1px solid #a0a0a0; border-radius: 2px; background: #bbb; color: #fff; }
.mdi.active button { border-color: #d0402b; background: #e0774f; }
.mdi button svg { width: 8px; height: 8px; }

.status { display: flex; align-items: stretch; justify-content: flex-end; flex: none; height: 41px; padding: 2px 2px 2px 0; font-size: 17px; }
.nav-style { display: flex; align-items: center; gap: 9px; padding: 2px 8px 0 33px; border-left: 1px solid #d2d2d2; }
.mouse { width: 15px; height: 21px; }
.nav-style .tri { width: 8px; height: 4px; }
.dims { display: flex; align-items: center; padding: 2px 3px 0 4px; border: solid #d2d2d2; border-width: 0 1px; }
.grip { width: 11px; height: 11px; margin-left: 8px; align-self: flex-end; }
```
